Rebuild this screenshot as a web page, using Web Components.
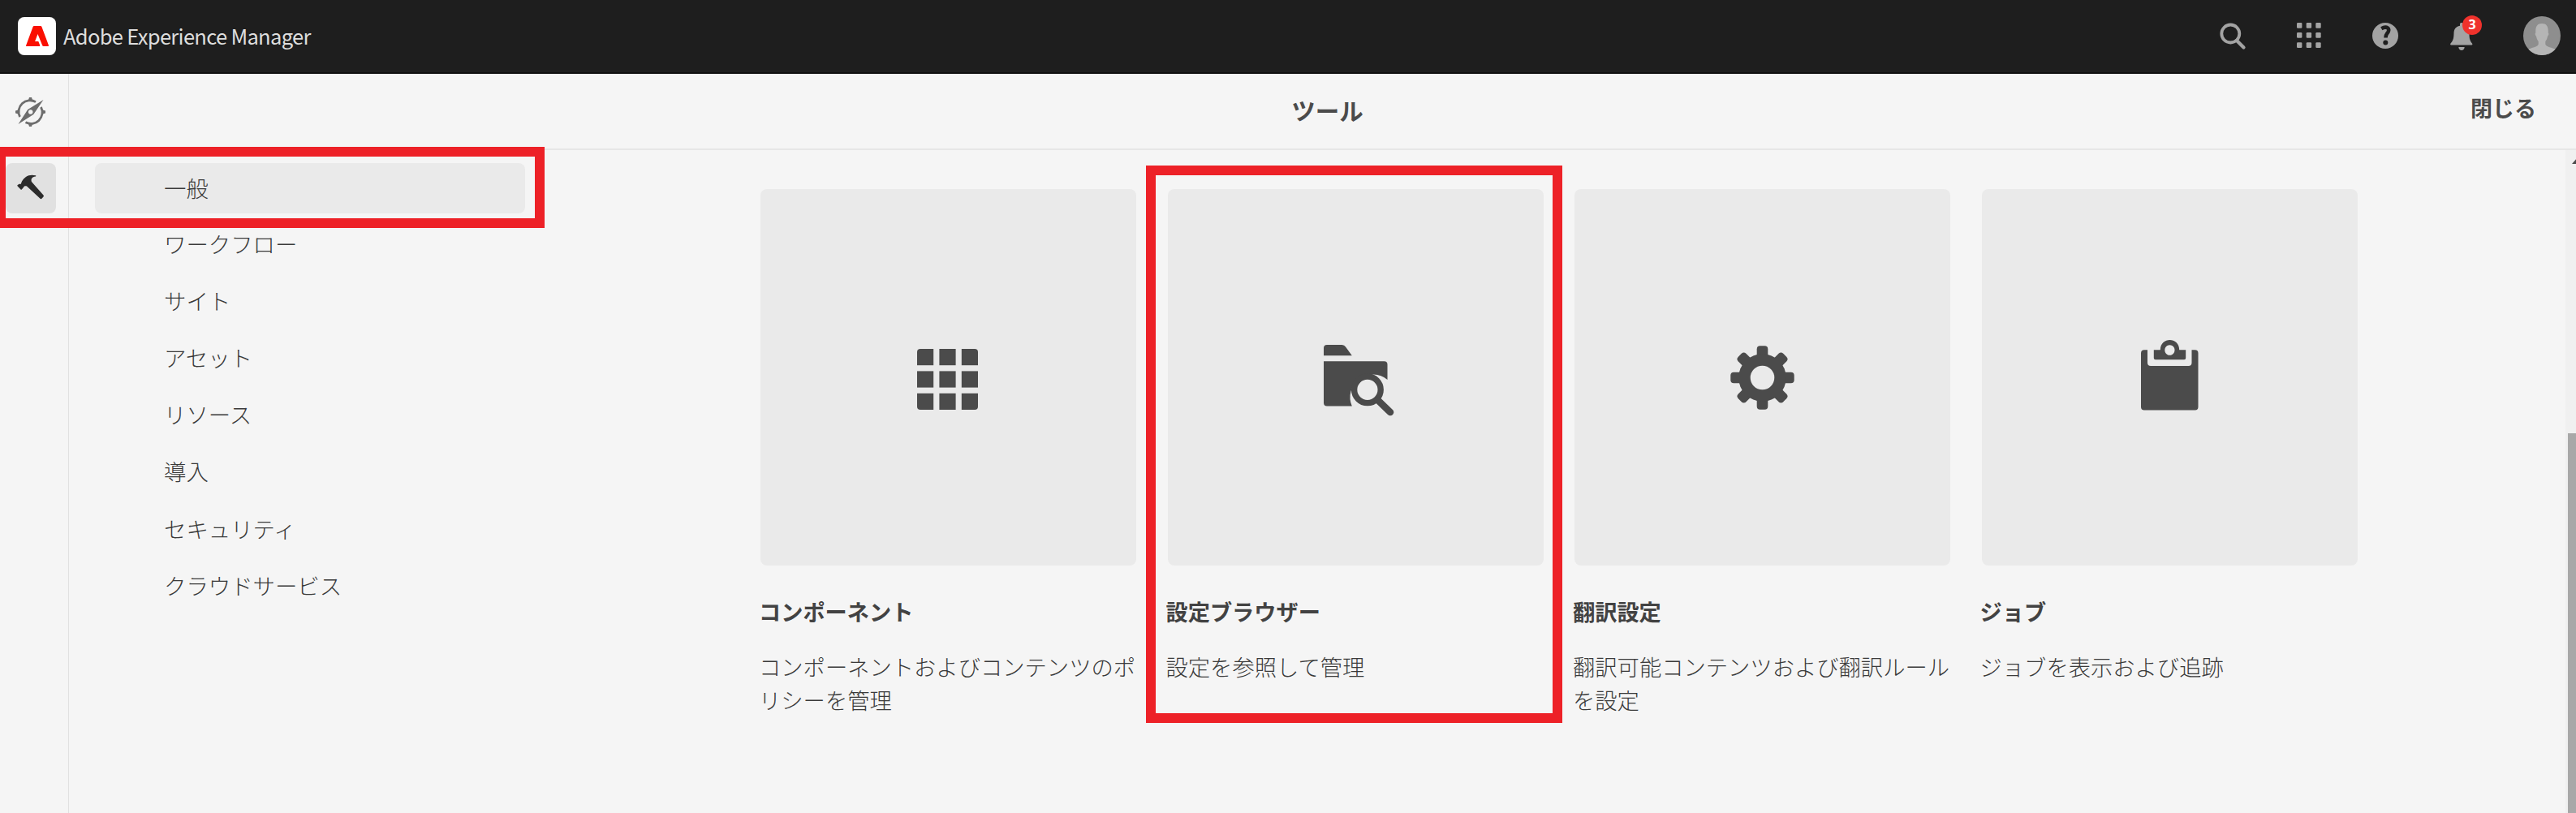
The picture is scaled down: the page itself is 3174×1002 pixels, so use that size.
<!DOCTYPE html>
<html lang="ja">
<head>
<meta charset="utf-8">
<title>Adobe Experience Manager</title>
<style>
html,body{margin:0;height:100%;overflow:hidden;background:#f5f5f5}
body{font-family:"Noto Sans CJK JP",sans-serif;color:#4b4b4b}
</style>
</head>
<body>
<aem-shell></aem-shell>
<script>
const define = (name, html) => customElements.define(name, class extends HTMLElement {
  constructor() {
    super();
    const t = document.createElement('template');
    t.innerHTML = html;
    this.attachShadow({ mode: 'open' }).append(t.content.cloneNode(true));
  }
});

const icons = {
  compass: [37, 36, `<g fill="none" stroke="#6e6e6e" stroke-width="2.8"><path d="M25 5.600A14 14 0 0 0 5.500 24M12.500 30.800A14 14 0 0 0 31.500 12"/></g><g fill="#6e6e6e"><path d="M17 0h3l1.500 5h-6zM17 36h3l1.500-5h-6zM0 16.500v3l5 1.500v-6zM37 16.500v3l-5 1.500v-6z"/><path fill-rule="evenodd" d="M34.500 3L22.300 21L3.500 33L15.200 14.900ZM18.700 15.200a2.800 2.800 0 1 0 .01 0z"/></g>`],
  hammer: [34, 31, `<path fill="#2c2c2c" d="M6 8.500C9 3 14.500-.8 23 1.200c.5.200.4 1-.1 1.200c-4.500.5-6 3-5 6.600L32.500 25.500a1.500 1.500 0 0 1 0 2l-1.800 2.100a1.500 1.500 0 0 1-2.200.1L12 14.500c-1.700-.6-3.200-.2-3.900 1.200l-2.300 2.700c-.4.400-.9.400-1.300 0L.7 14.400c-.5-.5-.4-1 0-1.400l2-1.200c.8 0 1.300.1 1.900.1z"/>`],
  search: [32, 33, `<g fill="none" stroke="#a3a3a3" stroke-width="3.800"><circle cx="13.300" cy="13.500" r="11"/><path d="M21 22L29.500 30.500" stroke-width="4.200" stroke-linecap="round"/></g>`],
  apps: [30, 32, `<g fill="#a3a3a3">${[0,11.7,23.3].map(x=>[0,12.1,24.2].map(y=>`<rect x="${x}" y="${y}" width="6.400" height="6.700" rx="1.200"/>`).join('')).join('')}</g>`],
  help: [32, 34, `<circle cx="16" cy="17" r="16" fill="#a3a3a3"/><g fill="none" stroke="#1e1e1e" stroke-width="4.600"><path d="M11.300 8.200C18 4.500 22 8.500 19.500 12.500C17.800 15 16.500 15.500 16.500 19.500"/></g><circle cx="16.300" cy="25.500" r="3" fill="#1e1e1e"/>`],
  bell: [28, 34, `<path fill="#a3a3a3" d="M12 1.500q0-1.500 1.500-1.500h1q1.500 0 1.500 1.500v2.300c5.500 1.200 7.500 4.500 7.500 9.500c0 6.500.8 9 3.700 12.400q.8 1.500-.8 1.800H1.100q-1.600-.3-.8-1.800C3.500 22.300 4.300 19.800 4.500 13.300C4.600 8.300 6.500 5 12 3.800zM10.300 30h7.400c-.3 5.300-7.100 5.300-7.400 0z"/>`],
  avatar: [46, 48, `<defs><clipPath id="c"><ellipse cx="23" cy="24" rx="23" ry="24"/></clipPath></defs><g clip-path="url(#c)"><path fill="#8e8e8e" d="M0 0h46v48H0z"/><path fill="#b5b5b5" d="M23 9c6 0 8.200 4 7.700 11.500c1.200.6.600 3.300-.7 4.200c-.6 3-1.500 4.700-2.700 6.300v3.500c1 4 8.500 3.500 12.700 7V50H6v-8.500c4.200-3.500 11.700-3 12.700-7V31c-1.200-1.600-2.100-3.300-2.700-6.300c-1.300-.9-1.900-3.600-.7-4.200C14.800 13 17 9 23 9z"/></g>`],
  tiles: [75, 75, `<defs><clipPath id="r"><rect width="75" height="75" rx="4"/></clipPath></defs><g fill="#4b4b4b" clip-path="url(#r)">${[0,27.4,54.8].map(x=>[0,27.4,54.8].map(y=>`<rect x="${x}" y="${y}" width="20.200" height="20.200"/>`).join('')).join('')}</g>`],
  folder: [87, 87, `<path fill="#4b4b4b" d="M0 13.200V4q0-4 4-4h18.500q3 0 4.500 2.500l7.800 10.700z"/><path fill="#4b4b4b" d="M0 20.300h74.500q4 0 4 4V43A28 28 0 0 0 34.800 75.500H4q-4 0-4-4z"/><circle cx="53.900" cy="55.300" r="16.300" fill="none" stroke="#4b4b4b" stroke-width="7.400"/><path d="M67 68.500L82 83" stroke="#4b4b4b" stroke-width="8.600" stroke-linecap="round"/>`],
  gear: [79, 79, `<g fill="#4b4b4b">${[0,45,90,135].map(a=>`<rect x="32.700" y=".3" width="13.600" height="78.400" rx="4" transform="rotate(${a} 39.500 39.500)"/>`).join('')}<circle cx="39.500" cy="39.500" r="29.300"/></g><circle cx="39.500" cy="39.500" r="14.800" fill="#eaeaea"/>`],
  clipboard: [71, 87, `<path fill="#4b4b4b" d="M4 12.200h4V28q0 4 4 4h46.500q4 0 4-4V12.200h4q4 0 4 4v66.300q0 4-4 4H4q-4 0-4-4V16.200q0-4 4-4z"/><path fill="#4b4b4b" fill-rule="evenodd" d="M15.800 12.200h8C24-4 47-4 47.200 12.200h8v10q0 2-2 2H17.800q-2 0-2-2zM35.400 6.200a6.100 6.300 0 1 0 .01 0z"/>`]
};
customElements.define('aem-icon', class extends HTMLElement {
  connectedCallback() {
    if (this.shadowRoot) return;
    const [w, h, body] = icons[this.getAttribute('name')];
    this.attachShadow({ mode: 'open' }).innerHTML =
      `<style>:host{display:block;flex:none;width:${w}px;height:${h}px}svg{display:block;overflow:visible}</style><svg width="${w}" height="${h}" viewBox="0 0 ${w} ${h}">${body}</svg>`;
  }
});

define('aem-logo', `<style>:host{display:flex;width:47px;height:47px;border-radius:8px;background:#fff;align-items:center;justify-content:center}</style>
<svg width="28" height="25" viewBox="0 0 28 25"><path fill="#fa0f00" d="M10 0h8q1 0 1.400 1L28 24q.2 1-.8 1h-5.500q-1 0-1.400-.8L14.500 10l-3.400 9h4.200l1.900 4.800q.3 1.200-.6 1.200H.8Q-.2 25 .1 24L8.600 1Q9 0 10 0z"/></svg>`);

define('aem-header', `<style>
:host{display:flex;box-sizing:border-box;height:91px;flex:none;background:#1e1e1e;border-bottom:2px solid #111;padding:0 19px 0 22px;align-items:center}
.name{margin-left:9px;font-size:25.500px;line-height:36px;letter-spacing:-.68px;color:#dedede;white-space:nowrap;flex:1;padding-bottom:1px}
.tools{display:flex;align-items:center;padding-bottom:1px}
.bell{position:relative;display:flex;margin:0 62px 0 64px;padding-top:1px}
.badge{position:absolute;left:15px;top:-8px;width:24px;height:24px;border-radius:50%;background:#ef322c;color:#fff;font:700 16px/23px "Open Sans",sans-serif;text-align:center}
.search{margin-right:63px}.apps{margin-right:63px}
</style><aem-logo></aem-logo><span class="name">Adobe Experience Manager</span>
<div class="tools"><aem-icon class="search" name="search"></aem-icon><aem-icon class="apps" name="apps"></aem-icon><aem-icon name="help"></aem-icon>
<div class="bell"><aem-icon name="bell"></aem-icon><span class="badge">3</span></div><aem-icon name="avatar"></aem-icon></div>`);

define('aem-rail', `<style>
:host{display:flex;flex-direction:column;box-sizing:border-box;width:85px;flex:none;border-right:1px solid #e1e1e1;padding:29px 0 0 7px}
.c{margin-left:12px}
.on{margin-top:45px;width:62px;height:62px;border-radius:8px;background:#e1e1e1;display:flex;justify-content:center;padding-top:14px;box-sizing:border-box}
.on aem-icon{margin-right:1px}
</style><aem-icon class="c" name="compass"></aem-icon><div class="on"><aem-icon name="hammer"></aem-icon></div>`);

define('aem-titlebar', `<style>
:host{display:grid;grid-template-columns:1fr auto 1fr;align-items:center;box-sizing:border-box;height:94px;flex:none;border-bottom:2px solid #e6e6e6;font-weight:700;padding-right:49px}
.t{font-size:29.500px;line-height:40px;padding:0 0 5px 61px}.x{font-size:27px;line-height:40px;text-align:right;padding-bottom:8px}
</style><span></span><span class="t">ツール</span><span class="x">閉じる</span>`);

define('aem-nav-item', `<style>
:host{display:flex;align-items:center;box-sizing:border-box;width:530px;height:62px;padding:0 0 4px 85px;border-radius:8px;font-size:27.400px;font-weight:300;line-height:40px;color:#3a3a3a}
:host([selected]){background:#eaeaea;padding-bottom:3px}
</style><slot></slot>`);

define('aem-nav', `<style>
:host{display:flex;flex-direction:column;gap:8.100px;flex:none;padding:16px 0 0 32px}
</style><slot></slot>`);

define('aem-card', `<style>
:host{display:flex;flex-direction:column;width:463px;flex:none}
.tile{box-sizing:border-box;height:464px;border-radius:8px;background:#eaeaea;display:flex;align-items:center;justify-content:center}
:host([kind=tiles]) .tile{padding:4px 3px 0 0}
:host([kind=folder]) .tile{padding:7px 0 0 8px}
:host([kind=clipboard]) .tile{padding:0 0 6px 1px}
h2{margin:36px 0 0 -2px;font-size:27.200px;line-height:40px;font-weight:700;color:#424242}
p{margin:28px -6px 0 -2px;font-size:27.300px;line-height:41px;font-weight:300;color:#3a3a3a}
</style><div class="tile"><slot name="icon"></slot></div><h2><slot name="title"></slot></h2><p><slot></slot></p>`);

define('aem-scrollbar', `<style>
:host{display:flex;flex-direction:column;align-items:flex-end;width:13px;flex:none;background:#f0f0f0;overflow:hidden}
svg{display:block;margin-top:10px}
.thumb{width:10px;flex:1;margin-top:332px;background:#a8a8a8}
</style><svg width="5" height="7"><path d="M0 7L7-1V7z" fill="#4b4b4b"/></svg><div class="thumb"></div>`);

define('aem-highlight', `<style>:host{display:block;position:absolute;box-sizing:border-box;border:12px solid #ed2127}</style>`);

define('aem-shell', `<style>
:host{display:flex;flex-direction:column;position:relative;height:1002px;overflow:hidden;background:#f5f5f5}
.row{display:flex;flex:1;min-height:0}
.main{display:flex;flex-direction:column;flex:1;min-width:0}
.cards{display:flex;flex:1;gap:38.500px;padding:48px 0 0 290px}
.a{left:-5px;top:181px;width:676px;height:100px}
.b{left:1412px;top:204px;width:513px;height:687px}
</style>
<aem-header></aem-header>
<div class="row"><aem-rail></aem-rail>
<div class="main"><aem-titlebar></aem-titlebar>
<div class="row"><aem-nav>
<aem-nav-item selected>一般</aem-nav-item><aem-nav-item>ワークフロー</aem-nav-item><aem-nav-item>サイト</aem-nav-item><aem-nav-item>アセット</aem-nav-item><aem-nav-item>リソース</aem-nav-item><aem-nav-item>導入</aem-nav-item><aem-nav-item>セキュリティ</aem-nav-item><aem-nav-item>クラウドサービス</aem-nav-item>
</aem-nav>
<div class="cards">
<aem-card kind="tiles"><aem-icon slot="icon" name="tiles"></aem-icon><span slot="title">コンポーネント</span>コンポーネントおよびコンテンツのポリシーを管理</aem-card>
<aem-card kind="folder"><aem-icon slot="icon" name="folder"></aem-icon><span slot="title">設定ブラウザー</span>設定を参照して管理</aem-card>
<aem-card kind="gear"><aem-icon slot="icon" name="gear"></aem-icon><span slot="title">翻訳設定</span>翻訳可能コンテンツおよび翻訳ルールを設定</aem-card>
<aem-card kind="clipboard"><aem-icon slot="icon" name="clipboard"></aem-icon><span slot="title">ジョブ</span>ジョブを表示および追跡</aem-card>
</div><aem-scrollbar></aem-scrollbar></div></div></div>
<aem-highlight class="a"></aem-highlight><aem-highlight class="b"></aem-highlight>`);
</script>
</body>
</html>
